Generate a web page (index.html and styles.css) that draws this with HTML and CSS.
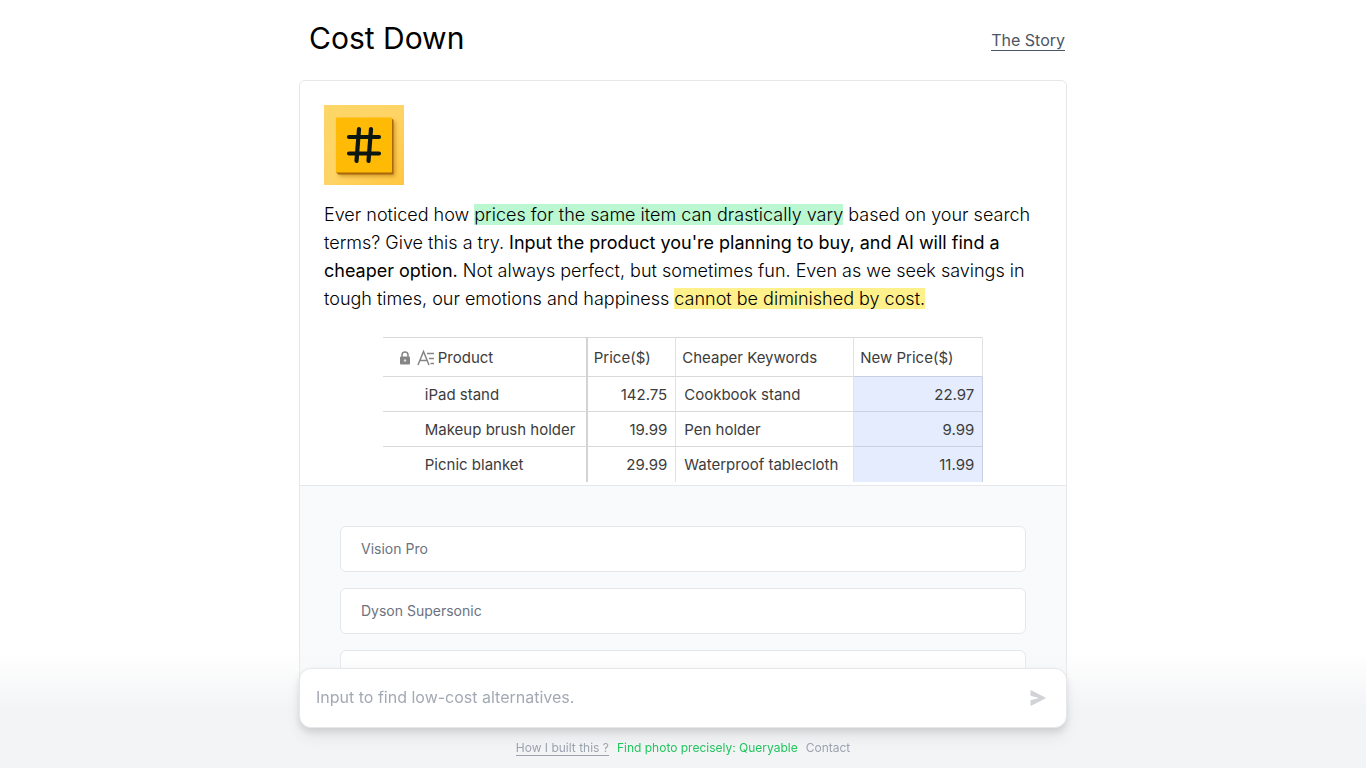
FILE: index.html
```html
<!DOCTYPE html>
<html lang="en">
<head>
<meta charset="utf-8">
<meta name="viewport" content="width=device-width, initial-scale=1">
<title>Cost Down</title>
<link rel="stylesheet" href="styles.css">
</head>
<body>
<div class="page">
  <header class="header">
    <h1 class="title">Cost Down</h1>
    <a class="story" href="#story">The Story</a>
  </header>
  <main class="card">
    <section class="intro">
      <svg class="logo" viewBox="0 0 80 80" role="img" aria-label="Hash">
        <defs>
          <linearGradient id="wall" x1="0" y1="0" x2="1" y2="1">
            <stop offset="0" stop-color="#fcd668"/>
            <stop offset="0.5" stop-color="#ffd466"/>
            <stop offset="1" stop-color="#ffc640"/>
          </linearGradient>
          <filter id="soft" x="-20%" y="-20%" width="140%" height="140%"><feGaussianBlur stdDeviation="2"/></filter>
        </defs>
        <rect width="80" height="80" fill="url(#wall)"/>
        <rect x="15" y="16" width="56" height="55" fill="#b87812" opacity="0.7" filter="url(#soft)"/>
        <path d="M12 67l2 2.500h55.500V15l-2.500-2z" fill="#a8690a"/>
        <rect x="12" y="12.500" width="56" height="55" rx="1" fill="#ffba05"/>
        <path d="M35 24l-2.500 32M47 24l-2.500 32M25 32h30M25 48.500h30" fill="none" stroke="#0b1713" stroke-width="4.200" stroke-linecap="round"/>
      </svg>
      <p class="lead">Ever noticed how <mark class="mark-green">prices for the same item can drastically vary</mark> based on your search terms? Give this a try. <strong class="strong">Input the product you're planning to buy, and AI will find a cheaper option.</strong> Not always perfect, but sometimes fun. Even as we seek savings in tough times, our emotions and happiness <mark class="mark-yellow">cannot be diminished by cost.</mark></p>
      <table class="prices">
        <colgroup><col class="col-product"><col class="col-price"><col class="col-keywords"><col class="col-new"></colgroup>
        <thead>
          <tr>
            <th scope="col"><span class="product-head">
              <svg class="lock" viewBox="0 0 12 14" aria-hidden="true"><path d="M3 6V4a3 3 0 0 1 6 0v2" fill="none" stroke="#858585" stroke-width="1.500"/><rect x="1" y="5.500" width="10" height="8" rx="1" fill="#858585"/><circle cx="6" cy="9.500" r="1.200" fill="#ddd"/></svg>
              <svg class="text-type" viewBox="0 0 18 16" aria-hidden="true"><path d="M1 15L6.500 1.500L12 15M3 10.500h7M10 3.500h7M12 8.500h5M13.500 13.500h3.500" fill="none" stroke="#858585" stroke-width="1.500"/></svg>
              Product</span></th>
            <th scope="col">Price($)</th><th scope="col">Cheaper Keywords</th><th scope="col">New Price($)</th>
          </tr>
        </thead>
        <tbody>
          <tr><td>iPad stand</td><td>142.75</td><td>Cookbook stand</td><td>22.97</td></tr>
          <tr><td>Makeup brush holder</td><td>19.99</td><td>Pen holder</td><td>9.99</td></tr>
          <tr><td>Picnic blanket</td><td>29.99</td><td>Waterproof tablecloth</td><td>11.99</td></tr>
        </tbody>
      </table>
    </section>
    <section class="examples">
      <button class="example" type="button">Vision Pro</button>
      <button class="example" type="button">Dyson Supersonic</button>
      <button class="example" type="button" aria-label="Another example"></button>
    </section>
  </main>
</div>
<div class="dock">
  <form class="ask">
    <input class="ask-input" type="text" placeholder="Input to find low-cost alternatives." aria-label="Product">
    <button class="send" type="button" aria-label="Send">
      <svg class="send-icon" viewBox="0 0 16 16" aria-hidden="true"><path d="M1.200 0.300Q0.500 0 0.500 0.800V5Q0.500 5.800 1.300 6L7.500 7.400Q8.500 8 7.500 8.600L1.300 10Q0.500 10.200 0.500 11V15.200Q0.500 16 1.200 15.700L15.300 8.600Q16 8 15.300 7.400Z" fill="#d1d3d6"/></svg>
    </button>
  </form>
  <footer class="footer">
    <a class="foot-link underlined" href="#built">How I built this ?</a>
    <a class="foot-link green" href="#queryable">Find photo precisely: Queryable</a>
    <a class="foot-link" href="#contact">Contact</a>
  </footer>
</div>
</body>
</html>
```
FILE: styles.css
```css
* { box-sizing: border-box; }
body {
  margin: 0;
  background: #fff;
  color: #000;
  font-family: Inter, "Liberation Sans", sans-serif;
}
h1, p { margin: 0; }
a { color: inherit; text-decoration: none; }
button, input { font: inherit; }

.page { max-width: 768px; margin: 0 auto; }
.header {
  display: flex;
  align-items: center;
  justify-content: space-between;
  height: 80px;
  padding: 0 2px 4px 10px;
}
.title { font-size: 30px; line-height: 36px; font-weight: 400; }
.story {
  margin-top: 5px;
  font-size: 16px;
  line-height: 20px;
  color: #4b5563;
  border-bottom: 1px solid #4b5563;
}
.card {
  border: 1px solid #e5e7eb;
  border-radius: 6px;
  background: #fff;
}
.intro { padding: 24px 24px 3px; }
.logo { display: block; width: 80px; height: 80px; }
.lead {
  margin-top: 16px;
  font-size: 18px;
  line-height: 28px;
  font-weight: 300;
}
.strong { font-weight: 400; }
.mark-green { background: #bbf7d0; color: inherit; }
.mark-yellow { background: #fef08a; color: inherit; }

.prices {
  width: 100%;
  max-width: 600px;
  margin: 24px auto 0;
  border-collapse: collapse;
  table-layout: fixed;
  font-size: 15px;
  line-height: 18px;
  color: #3c3c3c;
}
.col-product { width: 204px; }
.col-price { width: 89px; }
.col-keywords { width: 178px; }
.col-new { width: 129px; }
.prices th, .prices td {
  padding: 2px 8px 0;
  border-top: 1px solid #d9d9d9;
  border-right: 1px solid #e2e2e2;
  white-space: nowrap;
}
.prices th { height: 39px; padding: 2px 6px 0; font-weight: 400; text-align: left; }
.prices td { height: 35px; }
.prices th:first-child { padding-left: 16px; border-right: 2px solid #d4d4d4; }
.prices td:first-child { padding-left: 42px; border-right: 2px solid #d4d4d4; }
.prices td:nth-child(2n) { text-align: right; }
.prices td:last-child { background: #e4ecfd; border-color: #c9d0df; }
.product-head { display: flex; align-items: center; }
.lock { width: 12px; height: 14px; margin-right: 6px; }
.text-type { width: 18px; height: 16px; margin-right: 3px; }

.examples {
  display: flex;
  flex-direction: column;
  gap: 16px;
  padding: 40px 40px 64px;
  border-top: 1px solid #e5e7eb;
  background: #f9fafb;
}
.example {
  height: 46px;
  padding: 0 20px;
  border: 1px solid #e5e7eb;
  border-radius: 6px;
  background: #fff;
  color: #6b7280;
  font-size: 14px;
  line-height: 20px;
  text-align: left;
}

.dock {
  position: fixed;
  inset: auto 0 0;
  padding-top: 16px;
  background: linear-gradient(to bottom, rgba(243, 244, 246, 0), #f3f4f6 50%);
}
.ask {
  display: flex;
  align-items: center;
  max-width: 768px;
  height: 60px;
  margin: 0 auto;
  padding: 0 20px 0 16px;
  border: 1px solid #e5e7eb;
  border-radius: 12px;
  background: #fff;
  box-shadow: 0 4px 6px rgba(0, 0, 0, 0.1), 0 10px 15px rgba(0, 0, 0, 0.06);
}
.ask-input {
  flex: 1;
  min-width: 0;
  padding: 0 0 2px;
  border: 0;
  outline: 0;
  background: none;
  font-size: 16px;
  line-height: 24px;
  font-weight: 400;
}
.ask-input::placeholder { color: #a3a9b4; opacity: 1; }
.send { display: flex; padding: 0; border: 0; background: none; }
.send-icon { width: 16px; height: 16px; }
.footer {
  display: flex;
  justify-content: center;
  gap: 8px;
  padding: 12px 0 12px;
  font-size: 12px;
  line-height: 15px;
  color: #9ca3af;
}
.foot-link { border-bottom: 1px solid transparent; }
.underlined { border-color: #9ca3af; }
.green { color: #22c55e; }
```
